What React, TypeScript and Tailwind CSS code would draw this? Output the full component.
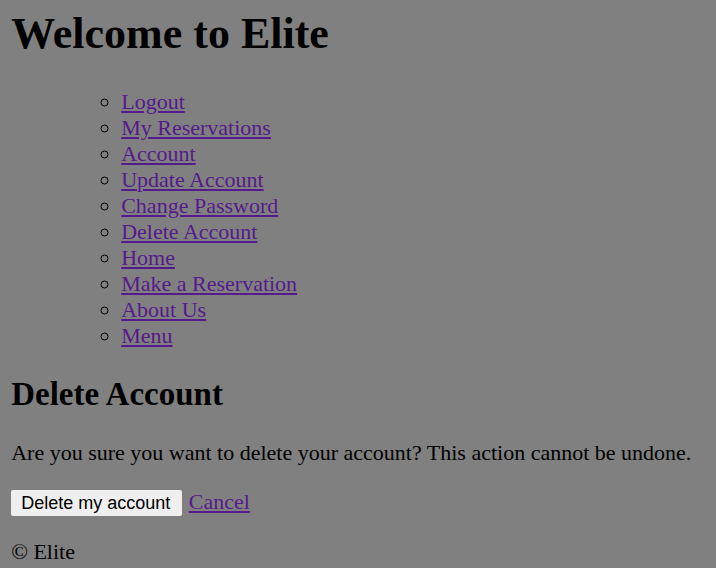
const links = [
    "Logout",
    "My Reservations",
    "Account",
    "Update Account",
    "Change Password",
    "Delete Account",
    "Home",
    "Make a Reservation",
    "About Us",
    "Menu",
];

function App() {
    return (
        <div className="min-h-screen bg-[#808080] px-[11.2px] pt-[7.8px] font-['Liberation_Serif',serif] text-[22px] leading-[26px] text-black">
            <h1 className="m-0 mb-[30px] text-[44px] font-bold leading-[51px]">Welcome to Elite</h1>

            <nav>
                <ul className="m-0 list-[circle] pl-[110px]">
                    {links.map((link) => (
                        <li key={link}>
                            <a href="#" className="text-[#551a8b] underline">
                                {link}
                            </a>
                        </li>
                    ))}
                </ul>
            </nav>

            <h2 className="mt-[26px] mb-[27px] text-[33px] font-bold leading-[38.6px]">Delete Account</h2>

            <p className="my-[22.4px]">Are you sure you want to delete your account? This action cannot be undone.</p>

            <div className="my-[22.4px]">
                <button
                    type="button"
                    className="inline-block h-[26px] rounded-[2px] bg-[#efefef] pl-[10px] pr-[12px] align-baseline font-['Liberation_Sans',Arial,sans-serif] text-[18px] leading-[22px] text-black"
                >
                    Delete my account
                </button>{" "}
                <a href="#" className="ml-[1px] text-[#551a8b] underline">
                    Cancel
                </a>
            </div>

            <footer>
                <p className="mt-[23px] mb-[22.4px]">© Elite</p>
            </footer>
        </div>
    );
}

export default App;
